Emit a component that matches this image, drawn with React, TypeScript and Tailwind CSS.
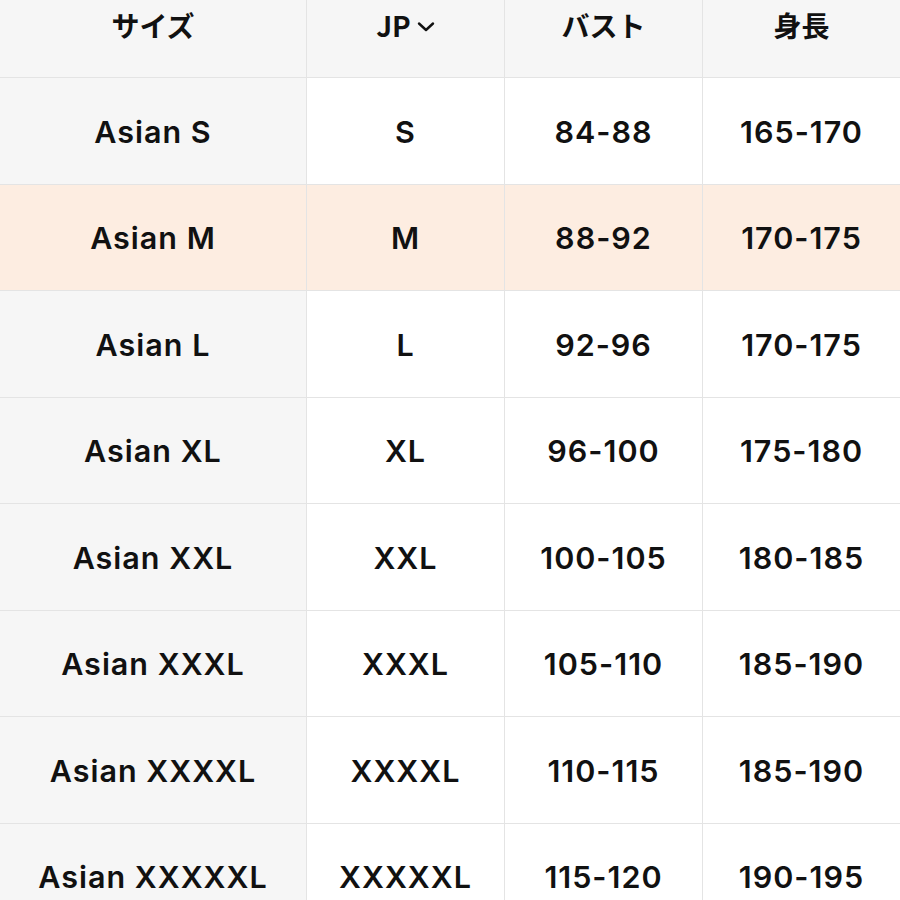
const rows = [
  ['Asian S', 'S', '84-88', '165-170'],
  ['Asian M', 'M', '88-92', '170-175'],
  ['Asian L', 'L', '92-96', '170-175'],
  ['Asian XL', 'XL', '96-100', '175-180'],
  ['Asian XXL', 'XXL', '100-105', '180-185'],
  ['Asian XXXL', 'XXXL', '105-110', '185-190'],
  ['Asian XXXXL', 'XXXXL', '110-115', '185-190'],
  ['Asian XXXXXL', 'XXXXXL', '115-120', '190-195'],
];

const highlighted = 'Asian M';

export default function App() {
  return (
    <div className="w-[900px] h-[900px] overflow-hidden bg-white text-[#111] font-['Inter','Noto_Sans_CJK_JP',sans-serif]">
      <div className="grid grid-cols-[307px_198px_198px_197px]">
        {/* header */}
        {['サイズ', 'JP', 'バスト', '身長'].map((h, i) => (
          <div
            key={h}
            className={`h-[78px] bg-[#f6f6f6] border-b border-[#e4e4e4] flex justify-center pt-[6px] ${i < 3 ? 'border-r' : ''}`}
          >
            <span className="flex items-start gap-[6px] text-[28px] leading-[38px] font-bold font-['Noto_Sans_CJK_JP','Inter',sans-serif]">
              {h}
              {h === 'JP' && (
                <svg width="18" height="12" viewBox="0 0 18 12" className="mt-[15px]">
                  <path d="M2 2.5 L9 9 L16 2.5" fill="none" stroke="#111" strokeWidth="2.4" strokeLinecap="round" strokeLinejoin="round" />
                </svg>
              )}
            </span>
          </div>
        ))}

        {rows.map((r) =>
          r.map((c, i) => {
            const hl = r[0] === highlighted;
            const bg = hl ? 'bg-[#fdede1]' : i === 0 ? 'bg-[#f6f6f6]' : 'bg-white';
            return (
              <div
                key={r[0] + i}
                className={`h-[106.5px] flex items-center justify-center border-b border-[#e4e4e4] ${bg} ${i < 3 ? 'border-r' : ''}`}
              >
                <span className="text-[30.5px] font-semibold tracking-[1px] pt-[2px]">{c}</span>
              </div>
            );
          })
        )}
      </div>
    </div>
  );
}
